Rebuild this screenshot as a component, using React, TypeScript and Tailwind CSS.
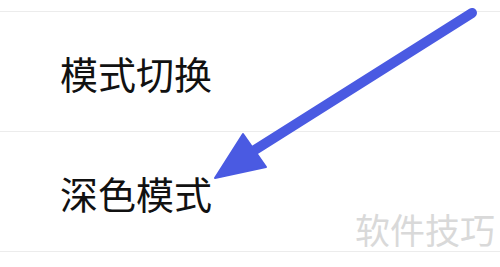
import React from 'react';

const rows = ['模式切换', '深色模式'];

const Arrow: React.FC = () => (
  <svg
    className="absolute inset-0 pointer-events-none"
    width={500}
    height={267}
    viewBox="0 0 500 267"
  >
    <line
      x1={472}
      y1={13}
      x2={250}
      y2={153}
      stroke="#4a5ae2"
      strokeWidth={10}
      strokeLinecap="round"
    />
    <polygon points="215,178 243,134 266,167" fill="#4a5ae2" stroke="#4a5ae2" strokeWidth={2} strokeLinejoin="round" />
  </svg>
);

export default function App() {
  return (
    <div
      className="relative w-[500px] h-[267px] overflow-hidden bg-white pt-[11px]"
      style={{ fontFamily: '"Noto Sans CJK SC", "Noto Sans", sans-serif' }}
    >
      <div className="border-t border-[#ececec]">
        {rows.map((label) => (
          <div
            key={label}
            className="h-[120px] flex items-center pl-[60px] pt-[2px] border-b border-[#ececec]"
          >
            <span className="text-[38px] leading-none text-[#111]">{label}</span>
          </div>
        ))}
      </div>
      <div className="absolute right-[5px] top-[210px] bg-white pl-[3px] text-[35px] leading-[38px] text-[#d9d9d9]">
        软件技巧
      </div>
      <Arrow />
    </div>
  );
}
